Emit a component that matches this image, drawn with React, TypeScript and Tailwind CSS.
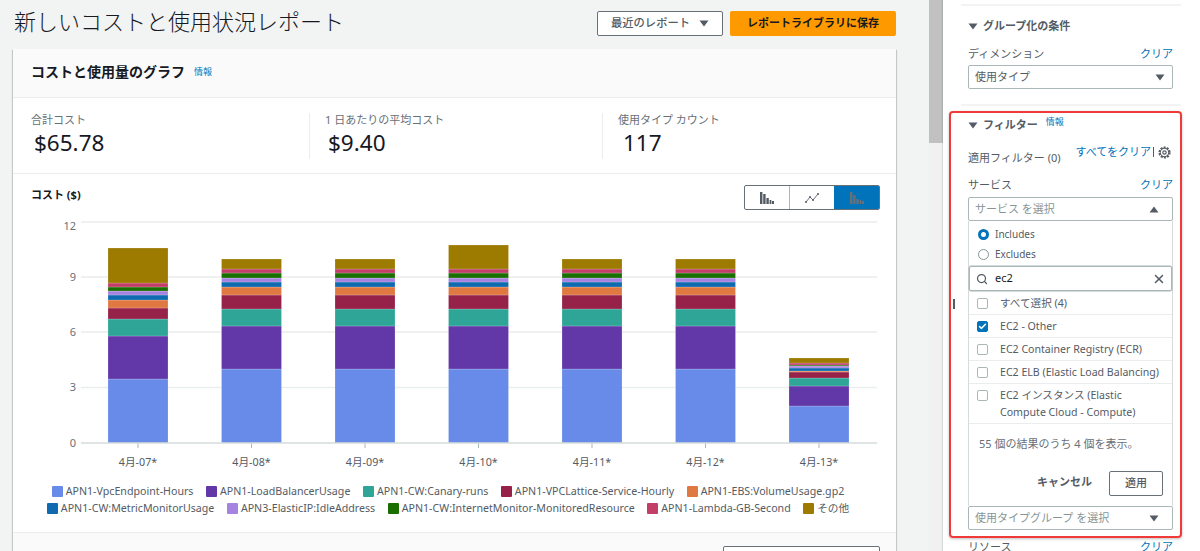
import React from 'react';
import { Search, X, Check } from 'lucide-react';

const colors = ['#688ae8', '#6237a7', '#2ea597', '#962249', '#e07941', '#0f6ab0', '#a783e1', '#1a6e00', '#c33d69', '#9c7b00'];

// segment tops in page pixels, bottom of every bar is the zero line
const regular = [370, 327, 310, 296, 288, 283, 279, 274, 270, 260];
const bars = [
  { x: 108, label: '4月-07*', tops: [380, 337, 320, 309, 301, 296, 292, 288, 284, 249] },
  { x: 221.5, label: '4月-08*', tops: regular },
  { x: 335, label: '4月-09*', tops: regular },
  { x: 448.5, label: '4月-10*', tops: [370, 327, 310, 296, 288, 283, 279, 274, 270, 246] },
  { x: 562, label: '4月-11*', tops: regular },
  { x: 675.5, label: '4月-12*', tops: regular },
  { x: 789, label: '4月-13*', tops: [407, 387, 379, 373, 372, 369, 367, 366, 364, 359] },
];

const legend = [
  [
    { name: 'APN1-VpcEndpoint-Hours', color: colors[0] },
    { name: 'APN1-LoadBalancerUsage', color: colors[1] },
    { name: 'APN1-CW:Canary-runs', color: colors[2] },
    { name: 'APN1-VPCLattice-Service-Hourly', color: colors[3] },
    { name: 'APN1-EBS:VolumeUsage.gp2', color: colors[4] },
  ],
  [
    { name: 'APN1-CW:MetricMonitorUsage', color: colors[5] },
    { name: 'APN3-ElasticIP:IdleAddress', color: colors[6] },
    { name: 'APN1-CW:InternetMonitor-MonitoredResource', color: colors[7] },
    { name: 'APN1-Lambda-GB-Second', color: colors[8] },
    { name: 'その他', color: colors[9] },
  ],
];

const grid = [
  { y: 223, labelY: 231, label: '12' },
  { y: 278, labelY: 282, label: '9' },
  { y: 333, labelY: 337, label: '6' },
  { y: 388.5, labelY: 392, label: '3' },
];

const Caret = ({ up = false }: { up?: boolean }) => (
  <svg width="10" height="7" viewBox="0 0 10 7" className="shrink-0">
    <path d={up ? 'M5 0.5 L9.5 6.5 H0.5 Z' : 'M0.5 0.5 H9.5 L5 6.5 Z'} fill="#545b64" />
  </svg>
);

const Select = ({ text, placeholder = false, up = false, className = '' }: { text: string; placeholder?: boolean; up?: boolean; className?: string }) => (
  <div className={`flex h-6 items-center justify-between rounded-[2px] border border-[#aab7b8] bg-white pl-[6px] text-[11px] ${placeholder ? 'pr-[13px] text-[#879596]' : 'pr-[7px] text-[#545b64]'} ${className}`}>
    <span>{text}</span>
    <Caret up={up} />
  </div>
);

const LabelRow = ({ label }: { label: string }) => (
  <div className="flex items-center justify-between text-[11px] leading-4 text-[#545b64]">
    <span>{label}</span>
    <span className="text-[#0073bb]">クリア</span>
  </div>
);

const Box = ({ checked = false }: { checked?: boolean }) => (
  <span className={`mt-[3px] flex h-[11px] w-[11px] shrink-0 items-center justify-center rounded-[2px] border ${checked ? 'border-[#0073bb] bg-[#0073bb]' : 'border-[#aab7b8] bg-white'}`}>
    {checked && <Check className="h-[9px] w-[9px] text-white" strokeWidth={4} />}
  </span>
);

const Option = ({ checked = false, first = false, children }: { checked?: boolean; first?: boolean; children: React.ReactNode }) => (
  <div className={`flex gap-[12px] pb-[2px] pl-2 pr-1 text-[10.6px] leading-[17px] text-[#545b64] ${first ? 'pt-[4px]' : 'border-t border-[#eaeded] pt-[3px]'}`}>
    <Box checked={checked} />
    <span>{children}</span>
  </div>
);

const Gear = () => (
  <svg width="13" height="13" viewBox="0 0 13 13" className="shrink-0">
    <circle cx="6.5" cy="6.5" r="5" fill="none" stroke="#545b64" strokeWidth="2.2" strokeDasharray="2 1.15" />
    <circle cx="6.5" cy="6.5" r="4.2" fill="none" stroke="#545b64" strokeWidth="1" />
    <circle cx="6.5" cy="6.5" r="1.7" fill="none" stroke="#545b64" strokeWidth="1.2" />
  </svg>
);

export default function App() {
  return (
    <div
      className="flex h-screen overflow-hidden bg-[#f2f3f3]"
      style={{ fontFamily: '"Noto Sans", "Noto Sans CJK JP", sans-serif' }}
    >
      <main className="w-[929px] shrink-0 pl-[13px] pr-[33px]">
        <div className="flex h-[49px] items-start justify-between">
          <h1 className="pl-[1px] pt-[4px] text-[22px] font-light leading-[34px] text-[#16191f]">新しいコストと使用状況レポート</h1>
          <div className="flex gap-[7px] pt-[11px]">
            <button className="flex h-[25px] w-[126px] items-center justify-center gap-[9px] rounded-[2px] border border-[#687078] bg-white text-[11.3px] font-medium text-[#545b64]">
              最近のレポート
              <Caret />
            </button>
            <button className="h-[25px] w-[166px] rounded-[2px] bg-[#ff9900] text-[11px] font-bold text-[#16191f]">レポートライブラリに保存</button>
          </div>
        </div>

        <section className="bg-white shadow-[0_1px_1px_0_rgba(0,28,36,0.3),1px_1px_1px_0_rgba(0,28,36,0.15),-1px_1px_1px_0_rgba(0,28,36,0.15)]">
          <div className="flex h-[49px] items-center gap-[9px] border-b border-[#eaeded] bg-[#fafafa] pb-[3px] pl-[18px]">
            <h2 className="text-[14px] font-bold text-[#16191f]">コストと使用量のグラフ</h2>
            <span className="text-[9px] text-[#0073bb]">情報</span>
          </div>

          <div className="flex h-[76px] items-center border-b border-[#eaeded] pl-[18px]">
            <div className="h-[46px] w-[278px] -translate-y-[1px]">
              <div className="text-[11px] leading-[16px] text-[#687078]">合計コスト</div>
              <div className="pl-[3px] text-[22.5px] leading-[30px] text-[#16191f]">$65.78</div>
            </div>
            <div className="h-[46px] w-[293px] border-l border-[#eaeded] pl-[15px]">
              <div className="-translate-y-[1px] text-[11px] leading-[16px] text-[#687078]">1 日あたりの平均コスト</div>
              <div className="-translate-y-[1px] pl-[3px] text-[22.5px] leading-[30px] text-[#16191f]">$9.40</div>
            </div>
            <div className="h-[46px] border-l border-[#eaeded] pl-[15px]">
              <div className="-translate-y-[1px] text-[11px] leading-[16px] text-[#687078]">使用タイプ カウント</div>
              <div className="-translate-y-[1px] pl-[5px] text-[22.5px] leading-[30px] text-[#16191f]">117</div>
            </div>
          </div>

          <div className="flex h-[40px] items-start justify-between pl-[18px] pr-[16px] pt-[11px]">
            <h3 className="pt-[2px] text-[11px] font-bold leading-4 text-[#16191f]">コスト ($)</h3>
            <div className="flex h-[25px] w-[136px] overflow-hidden rounded-[2px] border border-[#687078]">
              <span className="flex flex-1 items-center justify-center border-r border-[#aab7b8]">
                <svg width="14" height="12" viewBox="0 0 14 12"><path d="M0 0h2.4v12H0zM3.2 2h2.4v10H3.2zM6.4 6h2.4v6H6.4zM9.6 8h1.8v4H9.6zM12 9h2v3h-2z" fill="#545b64" /></svg>
              </span>
              <span className="flex flex-1 items-center justify-center">
                <svg width="14" height="10" viewBox="0 0 14 10"><path d="M1 9L5 4l3 3 5-6" fill="none" stroke="#687078" strokeWidth="1" /><circle cx="1" cy="9" r="1" fill="#545b64" /><circle cx="5" cy="4" r="1" fill="#545b64" /><circle cx="8" cy="7" r="1" fill="#545b64" /><circle cx="13" cy="1" r="1" fill="#545b64" /></svg>
              </span>
              <span className="flex w-[45px] items-center justify-center bg-[#0073bb]">
                <svg width="14" height="12" viewBox="0 0 14 12"><path d="M0 0h2.4v12H0zM3.2 3h2.4v9H3.2zM6.4 7h2.4v5H6.4zM9.6 8h1.8v4H9.6zM12 9h2v3h-2z" fill="#687078" /></svg>
              </span>
            </div>
          </div>

          <svg width="883" height="255" viewBox="13 215 883 255" className="block">
            {grid.map(g => (
              <g key={g.label}>
                <line x1="81" x2="877" y1={g.y} y2={g.y} stroke="#eaeded" strokeWidth="1.5" />
                <text x="76" y={g.labelY} textAnchor="end" fontSize="11" fill="#687078">{g.label}</text>
              </g>
            ))}
            <text x="76" y="447.5" textAnchor="end" fontSize="11" fill="#687078">0</text>
            {bars.map(bar => {
              let bottom = 444;
              return (
                <g key={bar.label}>
                  {bar.tops.map((top, i) => {
                    const h = bottom - top;
                    const rect = <rect key={i} x={bar.x} y={top} width="60" height={h} fill={colors[i]} stroke="#ffffff" strokeOpacity="0.25" strokeWidth="0.8" />;
                    bottom = top;
                    return rect;
                  })}
                  <line x1={bar.x + 30} x2={bar.x + 30} y1="444" y2="449" stroke="#aab7b8" />
                  <text x={bar.x + 30} y="467" textAnchor="middle" fontSize="10.7" fill="#545b64">{bar.label}</text>
                </g>
              );
            })}
            <line x1="81" x2="877" y1="444" y2="444" stroke="#d5dbdb" strokeWidth="1.5" />
          </svg>

          <div className="flex h-[64px] flex-col items-center gap-[2px] border-b border-[#eaeded] pr-[13px] pt-[15px]">
            {legend.map((row, r) => (
              <div key={r} className="flex gap-[12.5px]">
                {row.map(item => (
                  <div key={item.name} className="flex items-center gap-[3px] text-[10.65px] leading-[15px] text-[#545b64]">
                    <span className="h-[11px] w-[11px] rounded-[1px]" style={{ backgroundColor: item.color }} />
                    {item.name}
                  </div>
                ))}
              </div>
            ))}
          </div>

          <div className="flex justify-end bg-[#fafafa] pr-[16px] pt-[13px]">
            <div className="h-[25px] w-[157px] rounded-[2px] border border-[#687078] bg-white" />
          </div>
        </section>
      </main>

      <div className="h-full w-[14px] shrink-0 bg-[#f1f1f1]">
        <div className="h-[143px] bg-[#c1c1c1]" />
      </div>

      <aside className="relative flex-1 bg-white pt-[4px] shadow-[-1px_0_1px_rgba(0,28,36,0.1)]">
        <div className="absolute left-[10px] top-[299px] h-[10px] w-[2px] bg-[#545b64]" />
        <div className="ml-[18px] mr-[19px] border-t-2 border-[#f2f3f3]" />
        <div className="ml-[25px] mr-[27px] pt-[12px]">
          <div className="flex items-center gap-[5px] text-[11px] font-bold leading-4 text-[#545b64]">
            <Caret />
            グループ化の条件
          </div>
          <div className="mt-[12px]"><LabelRow label="ディメンション" /></div>
          <Select text="使用タイプ" className="mt-[3px]" />
        </div>
        <div className="ml-[18px] mr-[19px] mt-[15px] border-t-2 border-[#f2f3f3]" />

        <div className="ml-[6px] mr-[18px] mt-[5px] h-[427px] rounded-[4px] border-2 border-[#f03a3a] pl-[17px] pr-[7px] pt-[3px] shadow-[0_1px_3px_rgba(0,0,0,0.25)]">
          <div className="flex items-start">
            <div className="flex items-center gap-[5px] pt-[1px] text-[11px] font-bold leading-4 text-[#545b64]">
              <Caret />
              フィルター
            </div>
            <span className="ml-[8px] text-[9px] leading-[12px] text-[#0073bb]">情報</span>
          </div>
          <div className="mt-[11px] flex items-start justify-between">
            <span className="pt-[6px] text-[11px] leading-4 text-[#545b64]">適用フィルター (0)</span>
            <span className="mr-[2px] flex items-center text-[11px] leading-4 text-[#0073bb]">
              すべてをクリア
              <span className="ml-[2px] mr-[4px] h-[10px] w-px bg-[#545b64]" />
              <Gear />
            </span>
          </div>
          <div className="mt-[11px]"><LabelRow label="サービス" /></div>
          <Select text="サービス を選択" placeholder up className="mt-[4px]" />

          <div className="border-x border-[#d5dbdb] bg-white">
            <div className="flex h-[23px] items-center gap-[6px] pl-[9px] pt-[3px] text-[10px] text-[#545b64]">
              <span className="h-[11px] w-[11px] rounded-full border-[3px] border-[#0073bb] bg-white" />
              Includes
            </div>
            <div className="flex h-[20px] items-center gap-[6px] pl-[9px] text-[10px] text-[#545b64]">
              <span className="h-[11px] w-[11px] rounded-full border border-[#879596] bg-white" />
              Excludes
            </div>
            <div className="mt-[2px] flex h-[25px] items-center rounded-[2px] border border-[#aab7b8] pl-[6px] pr-[5px] text-[11px] text-[#16191f] shadow-[0_0_0_0.5px_#aab7b8]">
              <Search className="h-[12px] w-[12px] text-[#545b64]" strokeWidth={2.5} />
              <span className="ml-[7px] flex-1">ec2</span>
              <X className="h-[14px] w-[14px] text-[#545b64]" strokeWidth={2.5} />
            </div>
            <Option first>すべて選択 (4)</Option>
            <Option checked>EC2 - Other</Option>
            <Option>EC2 Container Registry (ECR)</Option>
            <Option>EC2 ELB (Elastic Load Balancing)</Option>
            <Option>EC2 インスタンス (Elastic Compute Cloud - Compute)</Option>
            <div className="border-t border-[#eaeded] pl-[10px] pt-[12px] text-[11px] leading-4 text-[#687078]">55 個の結果のうち 4 個を表示。</div>
            <div className="mt-[19px] flex h-[35px] items-start justify-end gap-[17px] pr-[9px]">
              <span className="pt-[3px] text-[11px] font-bold leading-4 text-[#545b64]">キャンセル</span>
              <button className="h-[25px] w-[54px] rounded-[2px] border border-[#687078] bg-white text-[11px] font-medium text-[#545b64]">適用</button>
            </div>
          </div>
          <Select text="使用タイプグループ を選択" placeholder />
        </div>

        <div className="ml-[25px] mr-[27px] mt-[1px]"><LabelRow label="リソース" /></div>
      </aside>
    </div>
  );
}
